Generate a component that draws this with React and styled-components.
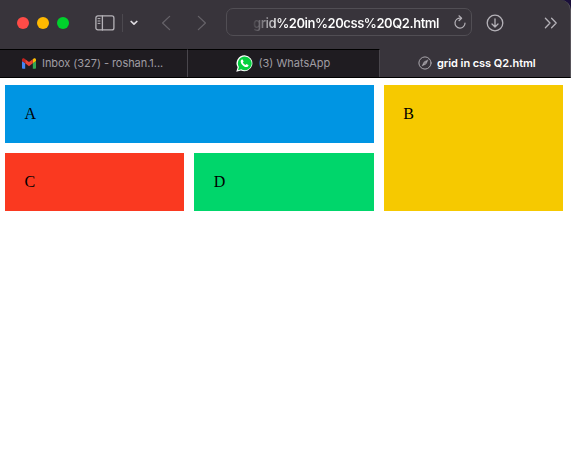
import React from "react";
import styled, { createGlobalStyle } from "styled-components";

const GlobalStyle = createGlobalStyle`
  * { box-sizing: border-box; }
  html, body { margin: 0; background: #fff; overflow: hidden; }
`;

const Window = styled.div`
  width: 571px;
  height: 476px;
  background: #fff;
`;

const Chrome = styled.header`
  height: 78px;
  background: #1a0f3a;
  font-family: Inter, "Liberation Sans", sans-serif;
`;

const ChromeInner = styled.div`
  height: 78px;
  display: flex;
  flex-direction: column;
  background: #38343b;
  border-bottom: 1px solid #000;
  border-top-right-radius: 10px;
  border-right: 1px solid #57545a;
`;

const Toolbar = styled.div`
  height: 49px;
  flex: none;
  display: flex;
  align-items: center;
  padding: 0 0 4px 17px;
`;

const Lights = styled.div`
  display: flex;
  gap: 8px;
`;

const Light = styled.span`
  width: 12px;
  height: 12px;
  border-radius: 50%;
  background: ${(p) => p.$color};
`;

const Icon = styled.svg`
  display: block;
  flex: none;
  margin-left: ${(p) => p.$ml || 0}px;
  fill: none;
  stroke: ${(p) => p.$color || "#b5b2b8"};
  stroke-width: ${(p) => p.$sw || 1.3};
  stroke-linecap: round;
  stroke-linejoin: round;
`;

const Divider = styled.span`
  width: 1px;
  height: 18px;
  margin-left: 7px;
  background: #4c494f;
`;

const AddressBar = styled.div`
  width: 246px;
  height: 28px;
  margin: -1px 0 0 19px;
  display: flex;
  align-items: center;
  justify-content: flex-end;
  padding-right: 5px;
  border: 1px solid #514e54;
  border-radius: 7px;
`;

const Address = styled.span`
  flex: none;
  width: 188px;
  font-size: 13px;
  font-weight: 600;
  line-height: 18px;
  letter-spacing: ${(p) => p.$ls}px;
  white-space: nowrap;
  padding-top: 2px;
  color: transparent;
  background: linear-gradient(90deg, #454248 0, #8e8b91 12px, #fff 27px);
  background-clip: text;
  -webkit-background-clip: text;
`;

const Tabs = styled.nav`
  flex: 1;
  display: grid;
  grid-template-columns: 188px 192px 1fr;
`;

const Tab = styled.div`
  display: flex;
  align-items: center;
  padding-left: ${(p) => p.$pl}px;
  padding-bottom: 1px;
  gap: ${(p) => p.$gap}px;
  background: ${(p) => (p.$active ? "#38343b" : "#1f1c21")};
  border-top: 1px solid ${(p) => (p.$active ? "#38343b" : "#000")};
  border-right: ${(p) => (p.$active ? "0" : "1px solid #49464c")};
  color: ${(p) => (p.$active ? "#fff" : "#a09da3")};
  font-size: 11px;
  font-weight: ${(p) => (p.$active ? 600 : 400)};
  letter-spacing: ${(p) => p.$ls}px;
  line-height: 14px;
  white-space: nowrap;
`;

const Page = styled.main`
  padding: 7px 8px 0 5px;
  font: 16px "Liberation Serif", "Times New Roman", serif;
  color: #000;
`;

const Grid = styled.div`
  display: grid;
  grid-template-columns: repeat(3, 1fr);
  grid-template-areas: "a a b" "c d b";
  grid-auto-rows: 58px;
  gap: 10px;
`;

const Cell = styled.div`
  grid-area: ${(p) => p.$area};
  background: ${(p) => p.$color};
  padding: 20px 19.5px;
  line-height: 18px;
`;

const SidebarIcon = () => (
  <Icon $ml={26} width="20" height="16" viewBox="0 0 20 16">
    <rect x="0.9" y="0.9" width="18" height="14" rx="2" />
    <path d="M7.4 1v14" />
    <path d="M3 3.6h2M3 6h2M3 8.4h2" strokeWidth="1" />
  </Icon>
);

const ReloadIcon = () => (
  <Icon $ml={13} $sw={1.2} width="12" height="14" viewBox="0 0 12 14">
    <path d="M6.7 3.1A5 5 0 1 0 11 8" />
    <path d="M5 0.8l2.6 2.4L5 5.7" />
  </Icon>
);

const DownloadIcon = () => (
  <Icon $ml={13.5} width="18" height="18" viewBox="0 0 18 18">
    <circle cx="9" cy="9" r="7.8" />
    <path d="M9 4.8v8M6 10l3 3 3-3" />
  </Icon>
);

const GmailIcon = () => (
  <svg width="14" height="11" viewBox="52 42 88 66">
    <path fill="#4285f4" d="M58 108h14V74L52 59v43c0 3.3 2.7 6 6 6" />
    <path fill="#34a853" d="M120 108h14c3.3 0 6-2.7 6-6V59l-20 15" />
    <path fill="#fbbc04" d="M120 48v26l20-15v-8c0-7.4-8.5-11.7-14.4-7.2" />
    <path fill="#ea4335" d="M72 74V48l24 18 24-18v26L96 92" />
    <path fill="#c5221f" d="M52 51v8l20 15V48l-5.6-4.2C60.5 39.3 52 43.6 52 51" />
  </svg>
);

const WhatsAppIcon = () => (
  <svg width="17" height="17" viewBox="0 0 17 17">
    <path fill="#fff" d="M8.7 0.3a8 8 0 1 1-3.8 15.2L0.3 16.7l1.3-4.4A8 8 0 0 1 8.7 0.3z" />
    <path fill="#05cf3f" d="M8.7 1.5a6.9 6.9 0 1 1-3.5 12.8L2 15.2l0.9-3.2A6.9 6.9 0 0 1 8.7 1.5z" />
    <path fill="#fff" d="M5.9 4.6h0.8l0.9 2-0.8 1c0.6 1.2 1.5 1.9 2.7 2.5l0.9-1.1 2.1 1c0.1 1.5-1.1 2.2-2.2 2.1C7.3 11.7 4.9 8.9 4.7 6.7c0-0.9 0.4-1.7 1.2-2.1z" />
  </svg>
);

const CompassIcon = () => (
  <Icon $color="#aaa7ad" $sw={1} width="14" height="14" viewBox="0 0 14 14">
    <circle cx="7" cy="7" r="6.1" />
    <path d="M10 4L8 8 4 10l2-4z" fill="#aaa7ad" strokeWidth="0.4" />
    <circle cx="7" cy="7" r="0.6" fill="#38343b" stroke="none" />
  </Icon>
);

export default function App() {
  return (
    <Window>
      <GlobalStyle />
      <Chrome>
        <ChromeInner>
          <Toolbar>
            <Lights>
              <Light $color="#ff4b47" />
              <Light $color="#ffb900" />
              <Light $color="#00d12c" />
            </Lights>
            <SidebarIcon />
            <Divider />
            <Icon $ml={6.5} $sw={1.7} $color="#dedbe0" width="8" height="6" viewBox="0 0 8 6">
              <path d="M1.2 1.5L4 4.2l2.8-2.7" />
            </Icon>
            <Icon $ml={23.5} $color="#656268" width="10" height="16" viewBox="0 0 10 16">
              <path d="M8.6 1.4L1.6 8l7 6.6" />
            </Icon>
            <Icon $ml={26} $color="#656268" width="10" height="16" viewBox="0 0 10 16">
              <path d="M1.4 1.4l7 6.6-7 6.6" />
            </Icon>
            <AddressBar>
              <Address $ls={-0.45}>grid%20in%20css%20Q2.html</Address>
              <ReloadIcon />
            </AddressBar>
            <DownloadIcon />
            <Icon $ml={40.5} width="14" height="12" viewBox="0 0 14 12">
              <path d="M1.4 1.2L6 6l-4.6 4.8M7.6 1.2L12.2 6l-4.6 4.8" />
            </Icon>
          </Toolbar>
          <Tabs>
            <Tab $pl={22} $gap={6} $ls={-0.05}>
              <GmailIcon />
              <span>Inbox (327) - roshan.1...</span>
            </Tab>
            <Tab $pl={48} $gap={5.5} $ls={0}>
              <WhatsAppIcon />
              <span>(3) WhatsApp</span>
            </Tab>
            <Tab $active $pl={37.5} $gap={5.5} $ls={-0.06}>
              <CompassIcon />
              <span>grid in css Q2.html</span>
            </Tab>
          </Tabs>
        </ChromeInner>
      </Chrome>
      <Page>
        <Grid>
          <Cell $area="a" $color="#0095e3">A</Cell>
          <Cell $area="b" $color="#f6c900">B</Cell>
          <Cell $area="c" $color="#fa3920">C</Cell>
          <Cell $area="d" $color="#00d66b">D</Cell>
        </Grid>
      </Page>
    </Window>
  );
}
